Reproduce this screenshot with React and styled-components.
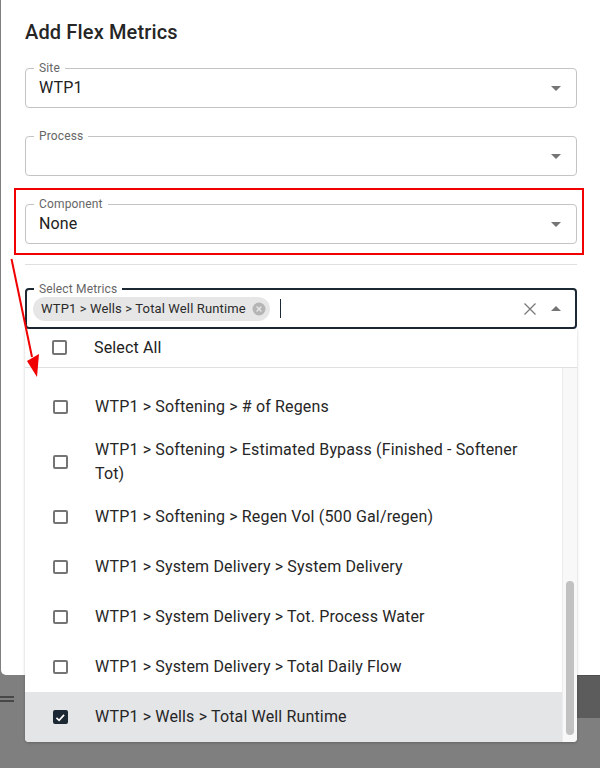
import React from "react";
import styled, { createGlobalStyle } from "styled-components";

const Global = createGlobalStyle`
  html, body { margin: 0; padding: 0; height: 100%; }
  body { background: #7f7f7f; font-family: Roboto, "Liberation Sans", sans-serif; color: #212121; overflow: hidden; }
`;

const Page = styled.div`
  position: relative;
  width: 600px;
  height: 768px;
  overflow: hidden;
  background: #7f7f7f;
`;

const BackdropBlock = styled.div`
  position: absolute;
  top: 675px;
  right: 0;
  width: 24px;
  height: 43px;
  background: #5c5c5c;
  border-top: 1px solid #4e4e4e;
  box-sizing: border-box;
`;

const BackdropLines = styled.div`
  position: absolute;
  top: 696px;
  left: 0;
  width: 14px;
  height: 6px;
  box-sizing: border-box;
  border-top: 2px solid #474747;
  border-bottom: 2px solid #474747;
`;

const Dialog = styled.section`
  position: absolute;
  top: 0;
  left: 1px;
  width: 599px;
  height: 675px;
  box-sizing: border-box;
  padding: 20px 23px 0 24px;
  background: #fff;
  border-radius: 0 0 0 5px;
`;

const Title = styled.h2`
  margin: 0 0 24px;
  font-size: 20px;
  line-height: 24px;
  font-weight: 500;
  letter-spacing: 0.15px;
  color: #262626;
`;

const Fields = styled.div`
  display: flex;
  flex-direction: column;
  gap: 28px;
`;

const Field = styled.div`
  position: relative;
  display: flex;
  align-items: center;
  box-sizing: border-box;
  height: ${(p) => (p.$focused ? "41px" : "40px")};
  padding: 0 ${(p) => (p.$focused ? "7px" : "8px")} 0 ${(p) => (p.$focused ? "6px" : "13px")};
  border: ${(p) => (p.$focused ? "2px solid #1c2833" : "1px solid #c4c4c4")};
  border-radius: 4px;
`;

const FieldLabel = styled.label`
  position: absolute;
  top: -8px;
  left: ${(p) => (p.$focused ? "7px" : "8px")};
  padding: 0 5px;
  background: #fff;
  font-size: 12px;
  line-height: 14px;
  letter-spacing: 0.15px;
  color: #666;
`;

const Value = styled.span`
  flex: 1;
  font-size: 16px;
  line-height: 20px;
  letter-spacing: 0.15px;
  color: #212121;
`;

const Arrow = styled.svg`
  flex: none;
  width: 24px;
  height: 24px;
  fill: #757575;
`;

const Chip = styled.span`
  display: inline-flex;
  align-items: center;
  flex: none;
  height: 24px;
  padding: 0 4px 0 8px;
  gap: 6px;
  border-radius: 12px;
  background: #e6e6e6;
  font-size: 13px;
  letter-spacing: 0.13px;
  color: #2b2b2b;
`;

const Caret = styled.span`
  flex: 1;
  height: 19px;
  margin-left: 10px;
  &::before {
    content: "";
    display: block;
    width: 1.5px;
    height: 19px;
    background: #1c2833;
  }
`;

const ClearIcon = styled.svg`
  flex: none;
  width: 20px;
  height: 20px;
  margin-right: 4px;
  stroke: #7a7a7a;
  stroke-width: 1.3;
  fill: none;
`;

const Divider = styled.hr`
  margin: 20px 0 23px;
  border: 0;
  border-top: 1px solid #e0e0e0;
`;

const Menu = styled.div`
  position: absolute;
  top: 329px;
  left: 25px;
  width: 552px;
  height: 413px;
  display: flex;
  flex-direction: column;
  background: #fff;
  border-radius: 0 0 4px 4px;
  overflow: hidden;
  box-shadow: 0 1px 3px rgba(0, 0, 0, 0.22);
`;

const SelectAll = styled.div`
  flex: none;
  display: flex;
  align-items: center;
  height: 39px;
  box-sizing: border-box;
  padding: 0 0 1px 27px;
  gap: 27.5px;
  border-bottom: 1px solid #e0e0e0;
  font-size: 16px;
  letter-spacing: 0.15px;
`;

const ListArea = styled.div`
  flex: 1;
  display: flex;
  min-height: 0;
`;

const List = styled.ul`
  flex: 1;
  margin: 0;
  padding: 14px 0 0;
  list-style: none;
`;

const Row = styled.li`
  display: flex;
  align-items: center;
  box-sizing: border-box;
  min-height: 50px;
  padding: 6px 36px 6px 28px;
  gap: 27.5px;
  background: ${(p) => (p.$selected ? "#e4e5e7" : "transparent")};
  font-size: 16px;
  line-height: 24px;
  letter-spacing: 0.15px;
  color: #262626;
`;

const Box = styled.span`
  flex: none;
  width: 14.5px;
  height: 14.5px;
  box-sizing: border-box;
  display: inline-flex;
  align-items: center;
  justify-content: center;
  border: 2px solid ${(p) => (p.$checked ? "#1c2833" : "#757575")};
  border-radius: 2px;
  background: ${(p) => (p.$checked ? "#1c2833" : "#fff")};
`;

const Track = styled.div`
  flex: none;
  position: relative;
  width: 15px;
  background: #f8f8f8;
  border-left: 1px solid #ececec;
  box-sizing: border-box;
`;

const Thumb = styled.div`
  position: absolute;
  left: 3px;
  bottom: 7px;
  width: 8px;
  height: 154px;
  border-radius: 4px;
  background: #c1c1c1;
`;

const Highlight = styled.div`
  position: absolute;
  top: 188px;
  left: 14px;
  width: 570px;
  height: 67px;
  box-sizing: border-box;
  border: 2px solid #f00000;
  pointer-events: none;
`;

const Pointer = styled.svg`
  position: absolute;
  top: 255px;
  left: 0;
  width: 50px;
  height: 130px;
  pointer-events: none;
`;

const DownArrow = () => (
  <Arrow viewBox="0 0 24 24"><path d="M7 10l5 5 5-5z" /></Arrow>
);
const UpArrow = () => (
  <Arrow viewBox="0 0 24 24"><path d="M7 14l5-5 5 5z" /></Arrow>
);

const Check = () => (
  <svg width="11" height="11" viewBox="0 0 11 11" fill="none" stroke="#fff" strokeWidth="1.7">
    <path d="M1.5 5.8l2.8 2.6 5.2-5.6" />
  </svg>
);

const rows = [
  "WTP1 > Softening > # of Regens",
  "WTP1 > Softening > Estimated Bypass (Finished - Softener Tot)",
  "WTP1 > Softening > Regen Vol (500 Gal/regen)",
  "WTP1 > System Delivery > System Delivery",
  "WTP1 > System Delivery > Tot. Process Water",
  "WTP1 > System Delivery > Total Daily Flow",
  "WTP1 > Wells > Total Well Runtime",
];

export default function App() {
  return (
    <Page>
      <Global />
      <BackdropBlock />
      <BackdropLines />
      <Dialog>
        <Title>Add Flex Metrics</Title>
        <Fields>
          <Field>
            <FieldLabel>Site</FieldLabel>
            <Value>WTP1</Value>
            <DownArrow />
          </Field>
          <Field>
            <FieldLabel>Process</FieldLabel>
            <Value />
            <DownArrow />
          </Field>
          <Field>
            <FieldLabel>Component</FieldLabel>
            <Value>None</Value>
            <DownArrow />
          </Field>
        </Fields>
        <Divider />
        <Field $focused>
          <FieldLabel $focused>Select Metrics</FieldLabel>
          <Chip>
            WTP1 &gt; Wells &gt; Total Well Runtime
            <svg width="14" height="14" viewBox="0 0 14 14">
              <circle cx="7" cy="7" r="6.5" fill="#b5b5b5" />
              <path d="M4.6 4.6l4.8 4.8M9.4 4.6l-4.8 4.8" stroke="#e6e6e6" strokeWidth="1.4" />
            </svg>
          </Chip>
          <Caret />
          <ClearIcon viewBox="0 0 20 20"><path d="M4.5 4.5l11 11M15.5 4.5l-11 11" /></ClearIcon>
          <UpArrow />
        </Field>
      </Dialog>
      <Menu>
        <SelectAll>
          <Box />
          Select All
        </SelectAll>
        <ListArea>
          <List>
            {rows.map((r, i) => (
              <Row key={r} $selected={i === rows.length - 1}>
                <Box $checked={i === rows.length - 1}>{i === rows.length - 1 && <Check />}</Box>
                <span>{r}</span>
              </Row>
            ))}
          </List>
          <Track><Thumb /></Track>
        </ListArea>
      </Menu>
      <Highlight />
      <Pointer viewBox="0 0 50 130">
        <path d="M11.5 4L32 102" stroke="#f00000" strokeWidth="2" fill="none" />
        <path d="M27 106L39 99L37 122Z" fill="#f00000" />
      </Pointer>
    </Page>
  );
}
